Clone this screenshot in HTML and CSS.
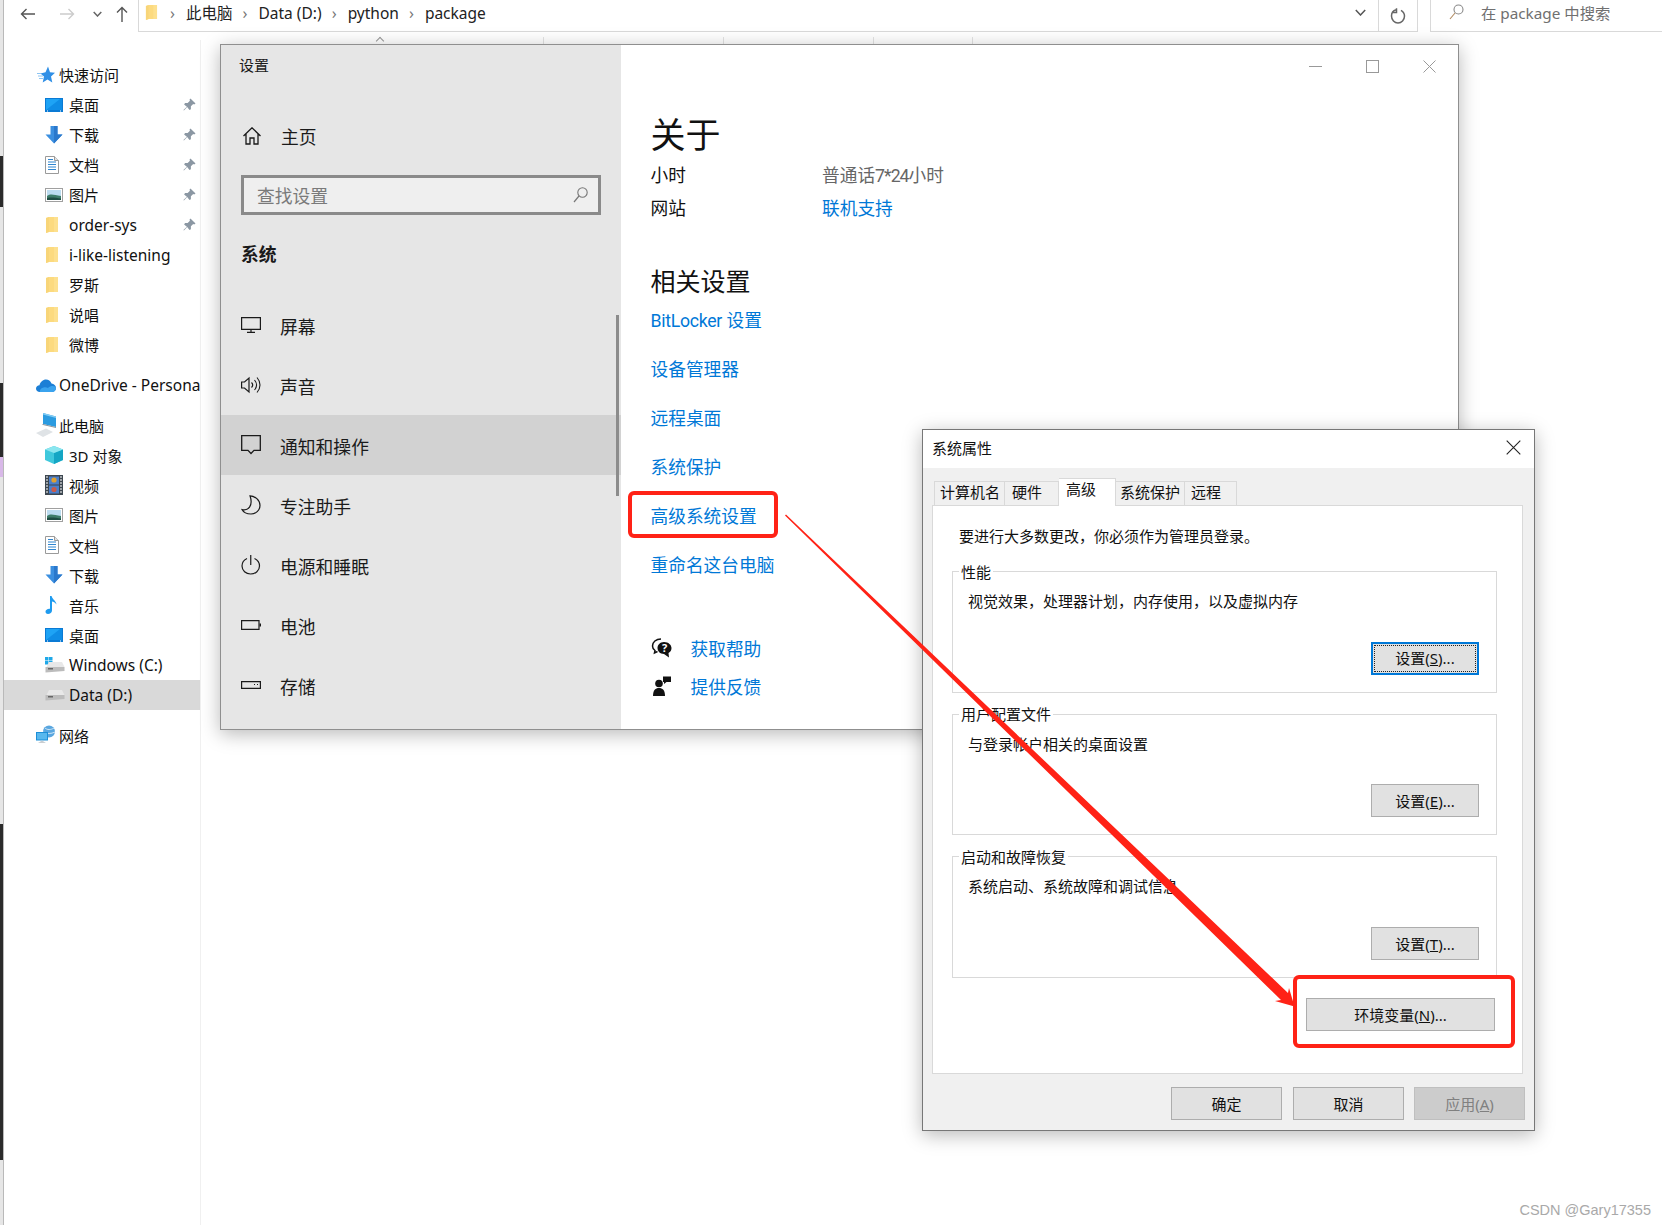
FILE: index.html
```html
<!DOCTYPE html>
<html lang="zh-CN">
<head>
  <meta charset="UTF-8">
  <title>系统属性</title>
  <link rel="stylesheet" href="styles.css">
</head>
<body>
  <svg class="defs" width="0" height="0">
    <symbol id="pin" viewBox="0 0 14 14"><path d="M8 0.5 13.5 6 12 7 11 6.5 8.5 9 8.5 12 7 13 4.5 9.8 1 13.5 0.5 13 4.2 9.5 1.2 7 2.2 5.5 5 5.5 7.5 3 7 2Z" fill="#8b97a3"/></symbol>
    <symbol id="folder" viewBox="0 0 14 18"><path d="M1 2 4 1 13 1 13 16 4 16 1 17Z" fill="#fde08e"/><path d="M4 1 9 1 9 16 4 16Z" fill="#f9d36a" opacity=".4"/><path d="M1 2 4 1 4 16 1 17Z" fill="#f8d578"/></symbol>
    <symbol id="desktop" viewBox="0 0 18 14"><rect width="18" height="14" fill="#0a7ad4"/><rect x="1" y="1" width="16" height="11" fill="#1ea3f5"/><path d="M1 12 15 1 17 1 17 12Z" fill="#0f8de6"/><rect x="2" y="12.5" width="1" height="1" fill="#fff"/><rect x="15" y="12.5" width="1" height="1" fill="#fff"/></symbol>
    <symbol id="download" viewBox="0 0 18 18"><path d="M5.5 0H12.5V8.5H17.5L9 17.5.5 8.5H5.5Z" fill="#3b8fe0"/><path d="M9 0H12.5V8.5H17.5L9 17.5Z" fill="#2a78cc"/></symbol>
    <symbol id="doc" viewBox="0 0 14 18"><path d="M.5.5H9.5L13.5 4.5V17.5H.5Z" fill="#fff" stroke="#9a9a9a"/><path d="M9.5.5V4.5H13.5" fill="#e3e3e3" stroke="#9a9a9a"/><path d="M3 3.5H8M3 6H11M3 8.5H11M3 11H11M3 13.5H11" stroke="#2f86d0" stroke-width="1"/></symbol>
    <symbol id="picture" viewBox="0 0 18 14"><rect x=".5" y=".5" width="17" height="13" fill="#fff" stroke="#a0a0a0"/><rect x="2" y="2" width="14" height="10" fill="#bcdcf0"/><path d="M2 8C6 5 9 7 16 8V12H2Z" fill="#3f7d6a"/><path d="M2 10C7 9 11 10 16 10.5V12H2Z" fill="#1f4d44"/></symbol>
    <symbol id="pc" viewBox="0 0 22 24"><path d="M7 0 20 3.500V14L7 11Z" fill="#2b9be0"/><path d="M7 0 20 3.500V5L7 1.500Z" fill="#84cdf4"/><path d="M6 11 7 11 20 14 20 15 7 12Z" fill="#8a949b"/><path d="M0 20 10 15.500 17 19 7 24Z" fill="#dfe3e6"/></symbol>
    <symbol id="cube" viewBox="0 0 18 18"><path d="M9 0 18 3.5V14L9 18 0 14V3.5Z" fill="#3fc8dc"/><path d="M9 7V18L18 14V3.5Z" fill="#14a6c4"/><path d="M0 3.5 9 0 18 3.5 9 7Z" fill="#8be6ef"/></symbol>
    <symbol id="video" viewBox="0 0 18 20"><rect width="18" height="20" fill="#3d4750"/><rect x="4" y="1.5" width="10" height="8" fill="#4a7fcc"/><rect x="4" y="10.5" width="10" height="8" fill="#4a7fcc"/><circle cx="9" cy="5" r="2.6" fill="#e0a030"/><circle cx="9" cy="14.5" r="2.6" fill="#c95a4a"/><path d="M1 2H3M1 5H3M1 8H3M1 11H3M1 14H3M1 17H3M15 2H17M15 5H17M15 8H17M15 11H17M15 14H17M15 17H17" stroke="#fff" stroke-width="1.2"/></symbol>
    <symbol id="music" viewBox="0 0 12 18"><path d="M5 0H6.6C7 3 11 4.500 11.500 8.500 10 6.500 8.500 5.800 7 5.600V14.500C7 16.500 5 18 3 18 1.300 18 .5 17 .5 15.800.5 14 2.500 12.500 5 12.800Z" fill="#1e9bef"/></symbol>
    <symbol id="drive" viewBox="0 0 20 12"><path d="M4 1H17L19.500 6H1.500Z" fill="#e8e8e8"/><path d="M.5 6H19.500V10L.5 11.500Z" fill="#bcbcbc"/><rect x="3" y="7" width="5" height="1.500" fill="#666"/></symbol>
    <symbol id="net" viewBox="0 0 20 20"><circle cx="13" cy="6.500" r="6" fill="#5aa7e0"/><path d="M9 3C11 5 15 5 18 3M7.500 7C11 9 15 9 19 7" stroke="#cfe6f6" fill="none"/><rect x="0" y="7" width="12" height="8.500" fill="#1d8fd8"/><rect x="1" y="8" width="10" height="6.500" fill="#58b8ee"/><path d="M2 18 6 15.500 10 18Z" fill="#c9ced2"/></symbol>
    <symbol id="mono-home" viewBox="0 0 18 18"><path d="M.5 9 9 .8 17.500 9M3 7V17H7V11H11V17H15V7" fill="none" stroke="currentColor" stroke-width="1.300"/></symbol>
    <symbol id="mono-screen" viewBox="0 0 20 16"><path d="M.6.6H19.400V12.400H.6ZM10 12.400V15M6 15.300H14" fill="none" stroke="currentColor" stroke-width="1.200"/></symbol>
    <symbol id="mono-sound" viewBox="0 0 20 18"><path d="M.6 6H3.500L8 2V16L3.500 12H.6Z" fill="none" stroke="currentColor" stroke-width="1.200"/><path d="M10.500 6.500C12 8 12 10 10.500 11.500M13.500 4C16 7 16 11 13.500 14M16 1.500C20 6 20 12 16 16.500" fill="none" stroke="currentColor" stroke-width="1.100"/></symbol>
    <symbol id="mono-note" viewBox="0 0 20 20"><path d="M.7.7H19.300V15.300H13L10 18.500 7 15.300H.7Z" fill="none" stroke="currentColor" stroke-width="1.300"/></symbol>
    <symbol id="mono-moon" viewBox="0 0 20 20"><path d="M9 .8C14 1 19 5 19 10.500 19 15.500 14.500 19 10 19 6 19 2.500 17.500 1 14.500 7 16 12.500 11 9 .8Z" fill="none" stroke="currentColor" stroke-width="1.200"/></symbol>
    <symbol id="mono-power" viewBox="0 0 20 20"><path d="M6 3.500C2.800 5 1 7.800 1 11 1 15.500 5 19 9.500 19 14.500 19 18.500 15.500 18.500 11 18.500 7.800 16.500 5 13.500 3.500M9.750 0V10" fill="none" stroke="currentColor" stroke-width="1.200"/></symbol>
    <symbol id="mono-battery" viewBox="0 0 20 10"><path d="M.6.6H18V9.400H.6Z" fill="none" stroke="currentColor" stroke-width="1.200"/><rect x="18.500" y="3.500" width="1.500" height="3" fill="currentColor"/></symbol>
    <symbol id="mono-storage" viewBox="0 0 20 8"><path d="M.6.6H19.400V7.400H.6Z" fill="none" stroke="currentColor" stroke-width="1.200"/><path d="M13 3.500H14M16 3.500H17" stroke="currentColor"/></symbol>
  </svg>

  <div class="page">
    <div class="edge">
      <span class="edge-light edge-a"></span>
      <span class="edge-dark edge-b"></span>
      <span class="edge-light edge-c"></span>
      <span class="edge-dark edge-d"></span>
      <span class="edge-purple"></span>
      <span class="edge-light edge-e"></span>
      <span class="edge-dark edge-f"></span>
      <span class="edge-light edge-g"></span>
    </div>

    <div class="explorer">
      <div class="toolbar">
        <div class="nav-buttons">
          <svg class="nav-back" width="16" height="12" viewBox="0 0 16 12"><path d="M15 6H1.500M6.500 1 1.500 6 6.500 11" fill="none" stroke="#555" stroke-width="1.400"/></svg>
          <svg class="nav-forward" width="16" height="12" viewBox="0 0 16 12"><path d="M1 6H14.500M9.500 1 14.500 6 9.500 11" fill="none" stroke="#ccc" stroke-width="1.400"/></svg>
          <svg class="nav-down" width="9" height="6" viewBox="0 0 9 6"><path d="M.7 1 4.500 5 8.300 1" fill="none" stroke="#666" stroke-width="1.500"/></svg>
          <svg class="nav-up" width="12" height="16" viewBox="0 0 12 16"><path d="M6 16V1.500M1 6.500 6 1.500 11 6.500" fill="none" stroke="#555" stroke-width="1.400"/></svg>
        </div>
        <div class="address">
          <svg class="address-folder" width="13" height="17"><use href="#folder"/></svg>
          <span class="crumb-sep">›</span>
          <span class="crumb">此电脑</span>
          <span class="crumb-sep">›</span>
          <span class="crumb">Data (D:)</span>
          <span class="crumb-sep">›</span>
          <span class="crumb">python</span>
          <span class="crumb-sep">›</span>
          <span class="crumb">package</span>
          <svg class="address-down" width="11" height="7" viewBox="0 0 11 7"><path d="M.8 1 5.500 6 10.200 1" fill="none" stroke="#555" stroke-width="1.500"/></svg>
          <div class="address-refresh">
            <svg width="16" height="16" viewBox="0 0 16 16"><path d="M6 1.800C2.500 2.800 1.500 5.500 1.500 8 1.500 12 4.500 15 8 15 11.500 15 14.500 12 14.500 8 14.500 5.500 13 3.500 11 2.300M6.500 .3V4.500H2.500" fill="none" stroke="#666" stroke-width="1.500"/></svg>
          </div>
        </div>
        <div class="search">
          <svg width="15" height="16" viewBox="0 0 15 16"><circle cx="9.500" cy="5.500" r="4.500" fill="none" stroke="#888" stroke-width="1.100"/><path d="M6 9 1 15" stroke="#b08a60" stroke-width="1.100"/></svg>
          <span>在 package 中搜索</span>
        </div>
      </div>

      <div class="column-ticks">
        <span class="sort-mark"></span>
        <span class="tick tick-1"></span>
        <span class="tick tick-2"></span>
        <span class="tick tick-3"></span>
        <span class="tick tick-4"></span>
      </div>

      <nav class="tree">
        <div class="tree-row tree-top"><svg class="star" width="19" height="18" viewBox="0 0 19 18"><path d="M12 .5 14 6.300 19 6.800 15 10.500 16.300 16.500 11.500 13.500 6.700 16.500 8 10.500 4.500 7.500 9.500 6.300Z" fill="#2f8fe6"/><path d="M1 7.500H5M2 10H7M3 12.500H7" stroke="#8cc4f2" stroke-width="1"/></svg><span>快速访问</span></div>
        <div class="tree-row"><svg class="ic" width="18" height="14"><use href="#desktop"/></svg><span>桌面</span><svg class="pin" width="13" height="13"><use href="#pin"/></svg></div>
        <div class="tree-row"><svg class="ic" width="18" height="18"><use href="#download"/></svg><span>下载</span><svg class="pin" width="13" height="13"><use href="#pin"/></svg></div>
        <div class="tree-row"><svg class="ic" width="14" height="18"><use href="#doc"/></svg><span>文档</span><svg class="pin" width="13" height="13"><use href="#pin"/></svg></div>
        <div class="tree-row"><svg class="ic" width="18" height="14"><use href="#picture"/></svg><span>图片</span><svg class="pin" width="13" height="13"><use href="#pin"/></svg></div>
        <div class="tree-row"><svg class="ic" width="14" height="18"><use href="#folder"/></svg><span class="latin">order-sys</span><svg class="pin" width="13" height="13"><use href="#pin"/></svg></div>
        <div class="tree-row"><svg class="ic" width="14" height="18"><use href="#folder"/></svg><span class="latin">i-like-listening</span></div>
        <div class="tree-row"><svg class="ic" width="14" height="18"><use href="#folder"/></svg><span>罗斯</span></div>
        <div class="tree-row"><svg class="ic" width="14" height="18"><use href="#folder"/></svg><span>说唱</span></div>
        <div class="tree-row"><svg class="ic" width="14" height="18"><use href="#folder"/></svg><span>微博</span></div>

        <div class="tree-row tree-top group-gap group-cloud"><svg class="cloud" width="20" height="13" viewBox="0 0 20 13"><path d="M4 13C1.500 13 0 11.500 0 9.500 0 7.500 1.500 6.200 3.500 6.200 4.200 3 7 .5 10 .5 12.500.5 14.500 2 15.500 4.500 18 4.800 20 6.500 20 9 20 11.500 18 13 16 13Z" fill="#1c7fd6"/><path d="M4 13C3 10 8 7 12 9 15 6 20 7 20 9 20 11.500 18 13 16 13Z" fill="#3aa3ee"/></svg><span class="clip latin">OneDrive - Persona</span></div>

        <div class="tree-row tree-top group-gap"><svg class="star" width="22" height="24"><use href="#pc"/></svg><span>此电脑</span></div>
        <div class="tree-row"><svg class="ic" width="18" height="18"><use href="#cube"/></svg><span>3D 对象</span></div>
        <div class="tree-row"><svg class="ic" width="18" height="20"><use href="#video"/></svg><span>视频</span></div>
        <div class="tree-row"><svg class="ic" width="18" height="14"><use href="#picture"/></svg><span>图片</span></div>
        <div class="tree-row"><svg class="ic" width="14" height="18"><use href="#doc"/></svg><span>文档</span></div>
        <div class="tree-row"><svg class="ic" width="18" height="18"><use href="#download"/></svg><span>下载</span></div>
        <div class="tree-row"><svg class="ic" width="12" height="18"><use href="#music"/></svg><span>音乐</span></div>
        <div class="tree-row"><svg class="ic" width="18" height="14"><use href="#desktop"/></svg><span>桌面</span></div>
        <div class="tree-row"><svg class="ic" width="20" height="18" viewBox="0 0 20 18"><rect y="1" width="3.500" height="3.500" fill="#1fa8e8"/><rect x="4" y="1" width="3.500" height="3.500" fill="#1fa8e8"/><rect y="5" width="3.500" height="3.500" fill="#1fa8e8"/><rect x="4" y="5" width="3.500" height="3.500" fill="#1fa8e8"/><use href="#drive" y="5" width="20" height="12"/></svg><span class="latin">Windows (C:)</span></div>
        <div class="tree-row is-active"><svg class="ic" width="20" height="12"><use href="#drive"/></svg><span class="latin">Data (D:)</span></div>

        <div class="tree-row tree-top group-gap"><svg class="star" width="20" height="20"><use href="#net"/></svg><span>网络</span></div>
      </nav>
    </div>

    <section class="win settings">
      <aside class="side">
        <div class="side-title">设置</div>
        <div class="side-home"><svg class="mono" width="18" height="18"><use href="#mono-home"/></svg><span>主页</span></div>
        <div class="side-search">
          <span>查找设置</span>
          <svg width="15" height="16" viewBox="0 0 15 16"><circle cx="9.500" cy="5.500" r="4.700" fill="none" stroke="#777" stroke-width="1.100"/><path d="M6 9 1 15" stroke="#777" stroke-width="1.200"/></svg>
        </div>
        <div class="side-group">系统</div>
        <div class="side-item"><svg class="mono" width="20" height="16"><use href="#mono-screen"/></svg><span>屏幕</span></div>
        <div class="side-item"><svg class="mono" width="20" height="18"><use href="#mono-sound"/></svg><span>声音</span></div>
        <div class="side-item is-current"><svg class="mono" width="20" height="20"><use href="#mono-note"/></svg><span>通知和操作</span></div>
        <div class="side-item"><svg class="mono" width="20" height="20"><use href="#mono-moon"/></svg><span>专注助手</span></div>
        <div class="side-item"><svg class="mono" width="20" height="20"><use href="#mono-power"/></svg><span>电源和睡眠</span></div>
        <div class="side-item"><svg class="mono" width="20" height="10"><use href="#mono-battery"/></svg><span>电池</span></div>
        <div class="side-item"><svg class="mono" width="20" height="8"><use href="#mono-storage"/></svg><span>存储</span></div>
        <span class="side-scroll"></span>
      </aside>
      <main class="about">
        <div class="win-controls">
          <svg width="13" height="13" viewBox="0 0 13 13"><path d="M0 6.500H13" stroke="#999"/></svg>
          <svg width="13" height="13" viewBox="0 0 13 13"><rect x=".5" y=".5" width="12" height="12" fill="none" stroke="#999"/></svg>
          <svg width="13" height="13" viewBox="0 0 13 13"><path d="M.5.5 12.500 12.500M12.500.5 .5 12.500" stroke="#999"/></svg>
        </div>
        <h1>关于</h1>
        <div class="about-row"><span class="about-key">小时</span><span class="about-muted">普通话<span class="narrow">7*24</span>小时</span></div>
        <div class="about-row"><span class="about-key">网站</span><a class="link">联机支持</a></div>
        <h2>相关设置</h2>
        <div class="links">
          <a class="link"><span class="narrow-word">BitLocker</span> 设置</a>
          <a class="link">设备管理器</a>
          <a class="link">远程桌面</a>
          <a class="link">系统保护</a>
          <a class="link">高级系统设置</a>
          <a class="link">重命名这台电脑</a>
        </div>
        <div class="help-row help-first">
          <svg width="22" height="20" viewBox="0 0 22 20"><path d="M10 1C5 1 1.500 4 1.500 8 1.500 10 2.500 11.500 4 12.500L3.500 15 6.500 13.500" fill="none" stroke="#111" stroke-width="1.500"/><path d="M13 4C9 4 6.500 7 6.500 10 6.500 13 9 16 13 16L18 19.500 17.500 15C19.500 14 20.500 12 20.500 10 20.500 7 17.500 4 13 4Z" fill="#111"/><text x="13.500" y="14" class="help-q">?</text></svg>
          <a class="link">获取帮助</a>
        </div>
        <div class="help-row">
          <svg width="22" height="20" viewBox="0 0 22 20"><circle cx="8" cy="7.500" r="3.800" fill="#111"/><path d="M2 20C2 14 4.500 12 8 12 11.500 12 14 14 14 20Z" fill="#111"/><path d="M12 .5H20V6H15.500L13 8V6H12Z" fill="#111"/></svg>
          <a class="link">提供反馈</a>
        </div>
      </main>
    </section>

    <section class="win dialog">
      <header class="dialog-head">
        <span>系统属性</span>
        <svg width="15" height="15" viewBox="0 0 15 15"><path d="M.7.7 14.300 14.300M14.300.7 .7 14.300" stroke="#222" stroke-width="1.100"/></svg>
      </header>
      <div class="dialog-body">
        <div class="tabs">
          <span class="tab tab-name">计算机名</span>
          <span class="tab tab-hw">硬件</span>
          <span class="tab tab-active">高级</span>
          <span class="tab tab-protect">系统保护</span>
          <span class="tab tab-remote">远程</span>
        </div>
        <div class="panel">
          <p class="panel-intro">要进行大多数更改，你必须作为管理员登录。</p>
          <fieldset class="group">
            <legend>性能</legend>
            <p>视觉效果，处理器计划，内存使用，以及虚拟内存</p>
            <button class="btn btn-focus"><span>设置(<u>S</u>)...</span></button>
          </fieldset>
          <fieldset class="group">
            <legend>用户配置文件</legend>
            <p>与登录帐户相关的桌面设置</p>
            <button class="btn">设置(<u>E</u>)...</button>
          </fieldset>
          <fieldset class="group">
            <legend>启动和故障恢复</legend>
            <p>系统启动、系统故障和调试信息</p>
            <button class="btn">设置(<u>T</u>)...</button>
          </fieldset>
          <div class="env-row"><button class="btn btn-env">环境变量(<u>N</u>)...</button></div>
        </div>
        <div class="dialog-foot">
          <button class="btn btn-foot">确定</button>
          <button class="btn btn-foot">取消</button>
          <button class="btn btn-foot btn-off">应用(<u>A</u>)</button>
        </div>
      </div>
    </section>

    <span class="mark mark-link"></span>
    <span class="mark mark-env"></span>
    <svg class="arrow" width="1666" height="1225" viewBox="0 0 1666 1225"><polygon points="785,515.600 786,514.400 1288,993 1289,988 1294.500,1006.500 1275,1001 1281,1000" fill="#ff2216"/></svg>

    <div class="watermark">CSDN @Gary17355</div>
  </div>
</body>
</html>
```

FILE: styles.css
```css
:root {
  --link: #0078d7;
  --red: #ff2216;
  --line: #d9d9d9;
}

* {
  box-sizing: border-box;
}

body {
  margin: 0;
  background: #fff;
  color: #111;
  font-family: "Noto Sans", "Noto Sans CJK SC", sans-serif;
  font-size: 15px;
}

.defs {
  position: absolute;
}

.page {
  position: relative;
  display: flex;
  width: 1666px;
  height: 1225px;
  overflow: hidden;
}

/* sliver of whatever sits behind the explorer */
.edge {
  display: flex;
  flex-direction: column;
  width: 4px;
  border-right: 1px solid #b9b9b9;
}

.edge-light { background: #e6e6e6; }
.edge-dark { background: #2b2b2b; }
.edge-purple { height: 20px; background: #d8b8e8; }
.edge-a { height: 156px; }
.edge-b { height: 51px; }
.edge-c { height: 176px; }
.edge-d { height: 74px; }
.edge-e { height: 347px; }
.edge-f { height: 336px; }
.edge-g { height: 65px; }

.explorer {
  flex: 1;
  position: relative;
}

.toolbar {
  display: flex;
  height: 32px;
}

.nav-buttons {
  position: relative;
  display: flex;
  align-items: center;
  width: 134px;
  height: 28px;
  padding-left: 16px;
}

.nav-forward { margin-left: 23px; }
.nav-down { margin-left: 18px; }
.nav-up { margin-left: 14px; }

.address {
  display: flex;
  align-items: center;
  width: 1280px;
  height: 32px;
  padding: 0 0 6px 6px;
  border-left: 1px solid var(--line);
  border-right: 1px solid var(--line);
  border-bottom: 1px solid var(--line);
  font-size: 15.500px;
}

.address-folder { margin-right: 11px; }

.crumb-sep {
  width: 17px;
  padding-left: 1px;
  color: #777;
  font-size: 16px;
}

.crumb {
  margin-right: 9px;
  color: #222;
  line-height: 20px;
}

.address-down { margin: 0 12px 0 auto; }

.address-refresh {
  display: flex;
  align-items: center;
  justify-content: center;
  width: 39px;
  height: 31px;
  margin-bottom: -6px;
  border-left: 1px solid var(--line);
}

.search {
  display: flex;
  align-items: center;
  gap: 17px;
  width: 232px;
  height: 32px;
  margin-left: 12px;
  padding: 0 0 7px 18px;
  border-left: 1px solid var(--line);
  border-bottom: 1px solid var(--line);
  color: #707070;
  font-size: 15.300px;
}

.column-ticks {
  position: relative;
  height: 8px;
}

.tick {
  position: absolute;
  top: 5px;
  width: 1px;
  height: 7px;
  background: #e3e3e3;
}

.tick-1 { left: 539px; }
.tick-2 { left: 719px; }
.tick-3 { left: 869px; }
.tick-4 { left: 968px; }

.sort-mark {
  position: absolute;
  top: 6px;
  left: 373px;
  width: 6px;
  height: 6px;
  border-top: 1px solid #999;
  border-left: 1px solid #999;
  transform: rotate(45deg);
}

.tree {
  width: 197px;
  height: 1185px;
  border-right: 1px solid #f0f0f0;
  padding-top: 19.500px;
}

.tree-row {
  position: relative;
  display: flex;
  align-items: center;
  height: 30px;
  padding-left: 41px;
  color: #111;
  white-space: nowrap;
}

.tree-row .ic {
  margin-right: 6px;
  flex: none;
}

/* icon widths differ, so text stays on one line via a fixed slot */
.tree-row .ic + span {
  position: absolute;
  left: 65px;
}

.tree-top {
  padding-left: 32px;
}

.tree-top span {
  position: absolute;
  left: 55px;
}

.tree-row .latin {
  font-size: 15.500px;
}

.tree-row .clip {
  width: 142px;
  overflow: hidden;
}

.group-gap { margin-top: 10px; }
.group-cloud { margin-top: 10.500px; }

.is-active { background: #d9d9d9; }

.pin {
  position: absolute;
  right: 4px;
  top: 8px;
}

/* windows on the desktop */
.win {
  position: absolute;
  border: 1px solid #8f8f8f;
  background: #fff;
  box-shadow: 0 4px 18px rgba(0, 0, 0, 0.28);
}

.settings {
  top: 44px;
  left: 220px;
  width: 1239px;
  height: 686px;
  display: flex;
}

.side {
  position: relative;
  width: 400px;
  background: #e6e6e6;
  color: #1a1a1a;
  font-size: 17.800px;
}

.side-title {
  padding: 10px 0 0 18px;
  height: 57px;
  font-size: 15px;
  line-height: 20px;
}

.side-home {
  display: flex;
  align-items: center;
  height: 60px;
  margin: 4px 0 9px;
  padding-left: 22px;
  gap: 20px;
}

.side-search {
  display: flex;
  align-items: center;
  justify-content: space-between;
  width: 360px;
  height: 40px;
  margin: 0 0 0 20px;
  padding: 0 10px 0 13px;
  border: 3px solid #8a8a8a;
  background: #efefef;
  color: #7a7a7a;
}

.side-group {
  height: 54px;
  margin-top: 12px;
  padding-left: 20px;
  font-weight: 700;
  line-height: 54px;
}

.side-item {
  display: flex;
  align-items: center;
  height: 60px;
  padding-left: 20px;
}

.side-item span {
  position: absolute;
  left: 59px;
  padding-top: 2px;
}

.side-item.is-current { background: #d2d2d2; }

.side-group + .side-item { margin-top: 14px; }

.side-scroll {
  position: absolute;
  top: 270px;
  right: 2px;
  width: 3px;
  height: 181px;
  background: #8c8c8c;
}

.about {
  position: relative;
  flex: 1;
  padding: 0 0 0 29.500px;
  font-size: 17.700px;
}

.win-controls {
  position: absolute;
  top: 15px;
  right: 22px;
  display: flex;
  gap: 44px;
}

h1 {
  margin: 0;
  padding-top: 67px;
  height: 115px;
  font-size: 35px;
  font-weight: 400;
  line-height: 46px;
}

h2 {
  margin: 0;
  padding-top: 38px;
  height: 82px;
  font-size: 25px;
  font-weight: 400;
  line-height: 34px;
  color: #111;
}

.about-row {
  display: flex;
  height: 33px;
  line-height: 30px;
}

.about-key {
  width: 171.500px;
}

.about-muted { color: #666; }

.narrow {
  font-family: Roboto, sans-serif;
  letter-spacing: -1px;
}

.narrow-word {
  font-family: Roboto, sans-serif;
  letter-spacing: -0.300px;
}

.link {
  color: var(--link);
}

.links {
  display: flex;
  flex-direction: column;
  gap: 24px;
  line-height: 25px;
}

.links .link:first-child {
  margin-bottom: -1px;
}

.help-row {
  display: flex;
  align-items: center;
  gap: 18px;
  height: 38px;
}

.help-first { margin-top: 51px; }

.help-q {
  fill: #fff;
  font-size: 11px;
  font-weight: 700;
  text-anchor: middle;
}

.dialog {
  top: 429px;
  left: 922px;
  width: 613px;
  height: 702px;
  border-color: #777;
  background: #f0f0f0;
  font-size: 15px;
}

.dialog-head {
  display: flex;
  align-items: center;
  justify-content: space-between;
  height: 38px;
  padding: 0 13px 3px 9px;
  background: #fff;
  font-size: 15px;
}

.dialog-body {
  padding: 10px 12px 0 9px;
}

.tabs {
  display: flex;
  align-items: flex-end;
  height: 28px;
  margin-left: 2px;
  position: relative;
  z-index: 1;
  margin-bottom: -1px;
}

.tab {
  display: block;
  height: 25px;
  padding-left: 5px;
  border: 1px solid var(--line);
  border-left: 0;
  border-bottom: 0;
  line-height: 20px;
  font-size: 15px;
}

.tab-name { width: 71px; border-left: 1px solid var(--line); }
.tab-hw { width: 54px; padding-left: 7px; }
.tab-active {
  width: 57px;
  height: 28px;
  padding-left: 7px;
  background: #fff;
  line-height: 20px;
}
.tab-protect { width: 69px; padding-left: 4px; }
.tab-remote { width: 52px; padding-left: 6px; }

.panel {
  width: 591px;
  height: 569px;
  padding: 0 25px 0 19px;
  border: 1px solid var(--line);
  background: #fff;
}

.panel-intro {
  margin: 0;
  padding: 20px 0 0 7px;
  height: 56.500px;
  line-height: 20px;
}

.group {
  position: relative;
  height: 130px;
  margin: 0 0 12.500px;
  padding: 10.500px 0 0;
  border: 1px solid var(--line);
  min-inline-size: 0;
}

.group legend {
  margin-left: 6px;
  padding: 0 2px;
  line-height: 18px;
}

.group p {
  margin: 0;
  padding-left: 15px;
  line-height: 20px;
}

/* the button hangs in the bottom corner of its group */
.group .btn {
  position: absolute;
  right: 17px;
  bottom: 17px;
  width: 108px;
}

.btn {
  height: 33px;
  padding: 0;
  border: 1px solid #adadad;
  background: #e1e1e1;
  color: #111;
  font-family: inherit;
  font-size: 15px;
}

.btn-focus {
  border: 2px solid #0078d7;
  padding: 1px;
}

.btn-focus span {
  display: block;
  height: 100%;
  border: 1px dotted #222;
  line-height: 25px;
}

.env-row {
  display: flex;
  justify-content: flex-end;
  padding: 7.500px 2px 0 0;
}

.btn-env {
  width: 189px;
}

.dialog-foot {
  display: flex;
  justify-content: flex-end;
  gap: 10px;
  margin: 13px -3px 0 0;
}

.btn-foot {
  width: 111px;
}

.btn-foot:first-child {
  margin-right: 1px;
}

.btn-off {
  background: #cccccc;
  border-color: #bfbfbf;
  color: #808080;
}

/* hand drawn annotations on top of the screenshot */
.mark {
  position: absolute;
  border: 4px solid var(--red);
  border-radius: 6px;
}

.mark-link {
  top: 491px;
  left: 628px;
  width: 150px;
  height: 47px;
}

.mark-env {
  top: 975px;
  left: 1293px;
  width: 222px;
  height: 73px;
}

.arrow {
  position: absolute;
  top: 0;
  left: 0;
  pointer-events: none;
}

.watermark {
  position: absolute;
  right: 15px;
  bottom: 7px;
  color: #a9a9a9;
  font-family: "Liberation Sans", sans-serif;
  font-size: 14.500px;
}
```
